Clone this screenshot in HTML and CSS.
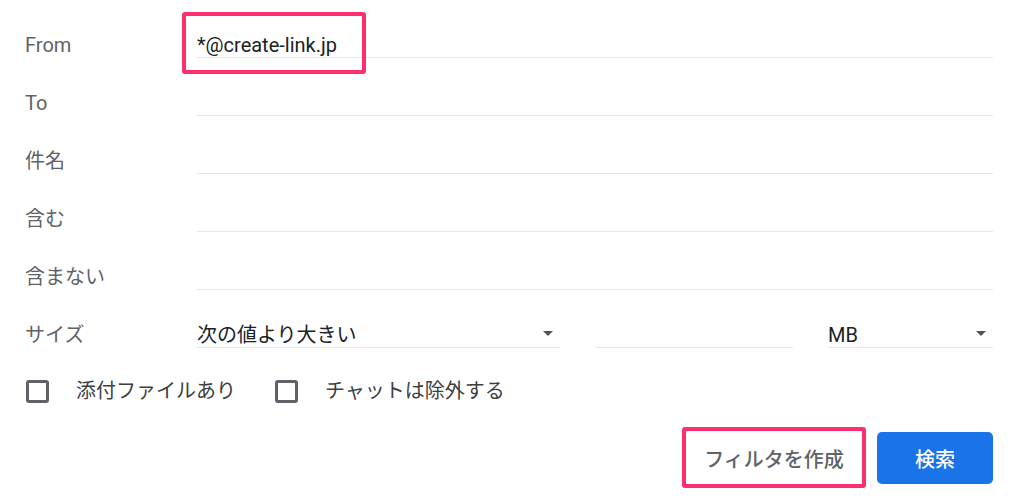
FILE: index.html
```html
<!DOCTYPE html>
<html lang="ja">
<head>
<meta charset="utf-8">
<title>検索オプション</title>
<link rel="stylesheet" href="styles.css">
</head>
<body>
<form class="adv">
  <div class="row">
    <label class="lbl">From</label>
    <div class="field"><span class="val">*@create-link.jp</span><span class="mark mark-from"></span></div>
  </div>
  <div class="row">
    <label class="lbl">To</label>
    <div class="field"></div>
  </div>
  <div class="row">
    <label class="lbl">件名</label>
    <div class="field"></div>
  </div>
  <div class="row">
    <label class="lbl">含む</label>
    <div class="field"></div>
  </div>
  <div class="row">
    <label class="lbl">含まない</label>
    <div class="field"></div>
  </div>
  <div class="row">
    <label class="lbl">サイズ</label>
    <div class="size">
      <div class="field select"><span class="val">次の値より大きい</span><span class="caret"></span></div>
      <div class="field"></div>
      <div class="field select"><span class="val">MB</span><span class="caret"></span></div>
    </div>
  </div>
  <div class="checks">
    <label class="check"><span class="box"></span><span class="ctext">添付ファイルあり</span></label>
    <label class="check"><span class="box"></span><span class="ctext">チャットは除外する</span></label>
  </div>
  <div class="actions">
    <span class="btn-wrap">
      <button type="button" class="btn btn-text">フィルタを作成</button>
      <span class="mark mark-btn"></span>
    </span>
    <button type="button" class="btn btn-primary">検索</button>
  </div>
</form>
</body>
</html>
```

FILE: styles.css
```css
* { box-sizing: border-box; }
html, body { margin: 0; padding: 0; background: #fff; }
body {
  font-family: Roboto, "Noto Sans CJK JP", sans-serif;
  font-size: 20px;
  color: #202124;
  min-height: 504px;
}
.adv {
  padding: 0 31px 20px 25px;
  width: 1024px;
}
.row {
  display: flex;
  align-items: flex-end;
  height: 58px;
}
.lbl {
  width: 172px;
  flex: none;
  height: 25px;
  line-height: 24px;
  padding-bottom: 1px;
  color: #5f6368;
}
.field {
  position: relative;
  flex: 1;
  height: 25px;
  line-height: 24px;
  border-bottom: 1px solid #e6e8eb;
  color: #202124;
  white-space: nowrap;
}
.size {
  flex: 1;
  display: grid;
  grid-template-columns: 363px 198px 1fr;
  column-gap: 35px;
}
.select {
  display: flex;
  align-items: center;
  justify-content: space-between;
  padding-right: 7px;
}
.caret {
  width: 0;
  height: 0;
  border-left: 5px solid transparent;
  border-right: 5px solid transparent;
  border-top: 5px solid #505357;
  margin-bottom: 3px;
}
.mark {
  position: absolute;
  border: 4px solid #fe2f6c;
  border-radius: 3px;
  pointer-events: none;
}
.mark-from {
  left: -15px;
  top: -21px;
  width: 184px;
  height: 62px;
}
.checks {
  display: flex;
  align-items: center;
  height: 30px;
  margin-top: 28px;
}
.check {
  display: flex;
  align-items: center;
  margin-right: 38px;
  color: #3c4043;
}
.box {
  width: 23px;
  height: 23px;
  border: 3px solid #5f6368;
  border-radius: 3px;
  margin-right: 27px;
  margin-left: 1px;
}
.ctext { line-height: 24px; }
.actions {
  display: flex;
  justify-content: flex-end;
  align-items: flex-start;
  margin-top: 26px;
  padding-bottom: 8px;
}
.btn-wrap {
  position: relative;
  display: block;
  margin-right: 15px;
}
.btn {
  display: block;
  height: 52px;
  border: none;
  border-radius: 5px;
  font-family: Roboto, "Noto Sans CJK JP", sans-serif;
  font-size: 20px;
  font-weight: 500;
  padding: 0;
  cursor: pointer;
}
.btn-text {
  width: 176px;
  background: transparent;
  color: #5f6368;
}
.mark-btn {
  left: -4px;
  top: -5px;
  right: -4px;
  bottom: -4px;
}
.btn-primary {
  width: 116px;
  background: #1a73e8;
  color: #fff;
}
```
